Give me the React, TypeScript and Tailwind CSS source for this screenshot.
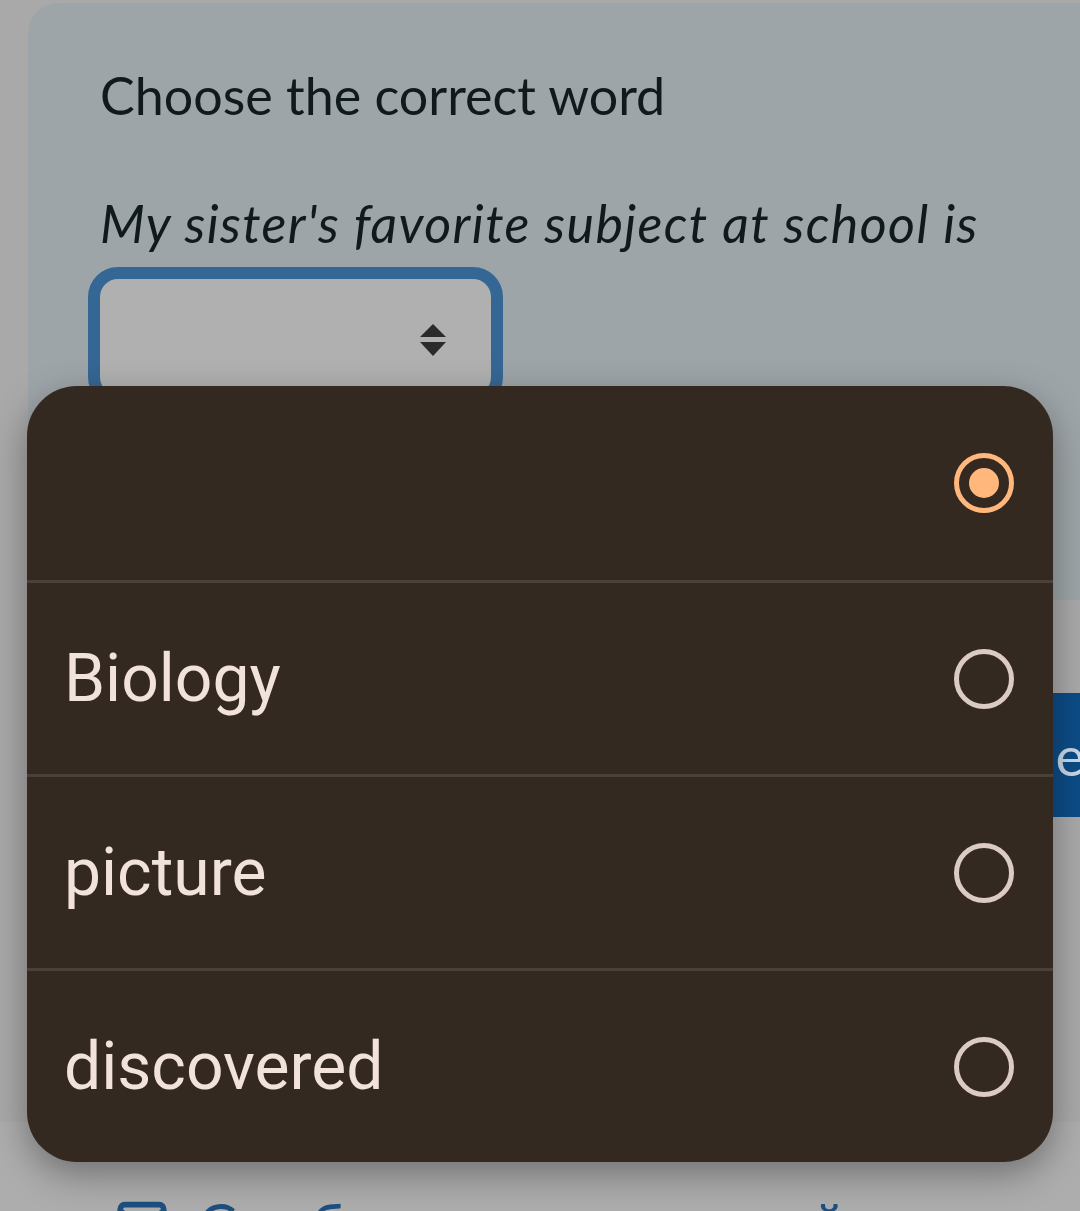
import { Mail } from "lucide-react";

const options = [
  { id: 0, label: "", selected: true },
  { id: 1, label: "Biology", selected: false },
  { id: 2, label: "picture", selected: false },
  { id: 3, label: "discovered", selected: false },
];

const Radio = ({ selected }: { selected: boolean }) =>
  selected ? (
    <span className="flex h-[60px] w-[60px] items-center justify-center rounded-full border-[5px] border-[#ffb77c]">
      <span className="h-[30px] w-[30px] rounded-full bg-[#ffb77c]" />
    </span>
  ) : (
    <span className="h-[60px] w-[60px] rounded-full border-[5px] border-[#dccbc2]" />
  );

const App = () => {
  return (
    <div className="relative h-[1211px] w-[1080px] overflow-hidden bg-[#a9a9a9] font-['Lato',sans-serif]">
      <div className="pt-[3px]">
        <div className="ml-[28px] w-[1100px] overflow-hidden rounded-l-[30px]">
          <div className="h-[597px] bg-[#9ea5a8] pl-[72px] pt-[60px] text-[#101a1d]">
            <p className="text-[52px] leading-[64px]">Choose the correct word</p>
            <p className="mt-[64px] text-[52px] italic leading-[64px] tracking-[1.4px]">
              My sister's favorite subject at school is
            </p>
            <div className="-ml-[12px] mt-[12px] flex h-[140px] w-[415px] items-start justify-end rounded-[30px] border-[12px] border-[#356795] bg-[#b0b0b0] pr-[44px] pt-[43px]">
              <svg width="28" height="36" viewBox="0 0 28 36">
                <path d="M14 2 L27 15 L1 15 Z" fill="#2b2b2b" />
                <path d="M1 20 L27 20 L14 34 Z" fill="#2b2b2b" />
              </svg>
            </div>
          </div>
          <div className="h-[355px] bg-[#a9a9a9] pt-[93px]">
            <div className="ml-[870px] flex h-[124px] w-[260px] items-center bg-[#0d4c87] pl-[90px] text-[55px] text-[#c9d8e8]">
              Check
            </div>
          </div>
        </div>
        <div className="mt-[167px] flex h-[200px] items-start gap-[30px] bg-[#adadad] pl-[116px] pt-[72px] text-[#1d4f80]">
          <Mail size={52} strokeWidth={2.6} className="mt-[2px]" />
          <span className="-mt-[2px] text-[58px] leading-[64px] tracking-[3px]">Сообщить о неточной</span>
        </div>
      </div>

      <div className="absolute left-[27px] top-[386px] w-[1026px] overflow-hidden rounded-[50px] bg-[#332921] font-['Roboto',sans-serif] shadow-[0_12px_36px_rgba(0,0,0,0.35)]">
        {options.map((o, i) => (
          <div
            key={o.id}
            className={`flex h-[194px] items-center justify-between pl-[37px] pr-[39px] ${i > 0 ? "border-t-[3px] border-[#4b413a]" : ""}`}
          >
            <span className="text-[66px] text-[#f1e2da]">{o.label}</span>
            <Radio selected={o.selected} />
          </div>
        ))}
      </div>
    </div>
  );
};

export default App;
